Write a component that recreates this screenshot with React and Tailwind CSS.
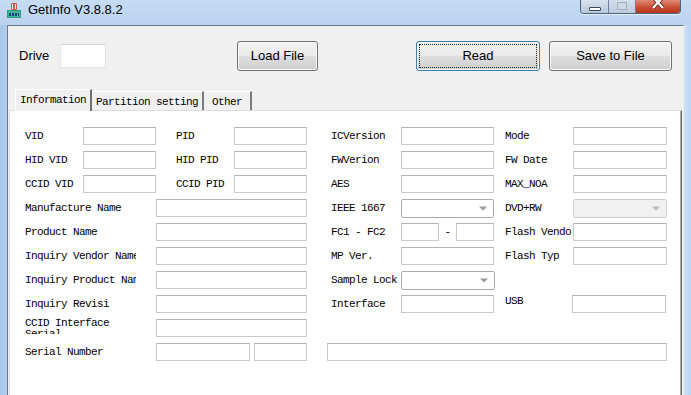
import React from "react";

const mono = { fontFamily: '"Liberation Mono", "DejaVu Sans Mono", monospace' };

function Box({ w, className = "" }) {
  return (
    <div
      className={
        "h-[18px] shrink-0 bg-white border border-[#cacaca] border-t-[#b4b4b4] " +
        w +
        " " +
        className
      }
    />
  );
}

function Combo({ w, disabled }) {
  return (
    <div
      className={
        "h-[19px] shrink-0 flex items-center justify-end pr-[6px] rounded-[2px] border " +
        (disabled ? "bg-[#f1f1f1] border-[#cdcdcd] " : "bg-white border-[#a9a9a9] ") +
        w
      }
    >
      <svg width="8" height="5" viewBox="0 0 8 5">
        <path d="M0 0.5 L8 0.5 L4 4.5 Z" fill={disabled ? "#b8b8b8" : "#9a9a9a"} />
      </svg>
    </div>
  );
}

function Lbl({ w, className = "", children }) {
  return (
    <div
      className={
        "shrink-0 overflow-hidden whitespace-nowrap text-[11px] tracking-[-0.6px] leading-[12px] text-black " +
        w +
        " " +
        className
      }
      style={mono}
    >
      {children}
    </div>
  );
}

function Btn({ w, focused, children }) {
  return (
    <div
      className={
        "h-[30px] shrink-0 rounded-[3px] border flex items-center justify-center text-[13px] text-black " +
        "bg-[linear-gradient(to_bottom,#f2f2f2_0%,#ebebeb_48%,#dddddd_52%,#cfcfcf_100%)] shadow-[inset_0_0_0_1px_#fbfbfb] " +
        (focused
          ? "border-[#3c7fb1] outline-1 outline-dotted outline-[#222] outline-offset-[-4px] "
          : "border-[#707070] ") +
        w
      }
      style={{ fontFamily: '"Liberation Sans", Arial, sans-serif' }}
    >
      {children}
    </div>
  );
}

function Row({ children }) {
  return <div className="flex items-center h-[18px]">{children}</div>;
}

export default function App() {
  return (
    <div className="w-[691px] h-[395px] overflow-hidden flex flex-col bg-[#b7d1ee]">
      {/* Title bar */}
      <div className="h-[25px] shrink-0 flex items-start bg-[linear-gradient(to_bottom,#c6dcf3,#bad3ee)]">
        <div className="ml-[7px] mt-[3px] w-[14px] h-[14px]">
          <svg width="14" height="15" viewBox="0 0 14 15">
            <rect x="4" y="0" width="6" height="7" rx="1" fill="#d9534a" />
            <rect x="5" y="1" width="1" height="5" fill="#fff" />
            <rect x="8" y="1" width="1" height="5" fill="#fff" />
            <rect x="0" y="7" width="14" height="8" fill="#2f9c86" />
            <rect x="1" y="8" width="12" height="6" fill="#3fb49a" />
            <rect x="2" y="10" width="2" height="3" fill="#1c3f8a" />
            <rect x="5" y="10" width="2" height="3" fill="#1c3f8a" />
            <rect x="8" y="10" width="2" height="3" fill="#1c3f8a" />
            <rect x="11" y="10" width="1" height="3" fill="#1c3f8a" />
          </svg>
        </div>
        <div
          className="ml-[7px] mt-[1px] text-[13px] leading-[17px] text-black"
          style={{ fontFamily: '"Liberation Sans", Arial, sans-serif' }}
        >
          GetInfo V3.8.8.2
        </div>
        <div className="flex-1" />
        {/* window controls */}
        <div className="mr-[10px] flex h-[14px] rounded-b-[4px] border border-t-0 border-[#4c6380] overflow-hidden shadow-[0_1px_0_#e6f0fa]">
          <div className="w-[28px] h-full bg-[linear-gradient(to_bottom,#d6e2ef,#b7c9dd)] flex items-start justify-center border-r border-[#6d839d]">
            <div className="mt-[7px] w-[12px] h-[4px] bg-white border border-[#38475a] rounded-[1px]" />
          </div>
          <div className="w-[27px] h-full bg-[linear-gradient(to_bottom,#d3dfec,#bccbdc)] flex items-start justify-center border-r border-[#6d839d]">
            <div className="mt-[2px] w-[10px] h-[8px] border border-[#9fb0c3] bg-[#cdd9e6]" />
          </div>
          <div className="w-[44px] h-full bg-[linear-gradient(to_bottom,#e08a74,#c84a30_60%,#b8381f)] flex items-start justify-center">
            <svg width="14" height="10" viewBox="0 0 14 10">
              <path d="M2 -3 L12 8 M12 -3 L2 8" stroke="#5a1a0f" strokeWidth="4" />
              <path d="M2 -3 L12 8 M12 -3 L2 8" stroke="#ffffff" strokeWidth="2.4" />
            </svg>
          </div>
        </div>
      </div>

      <div className="flex flex-1 min-h-0">
        {/* left frame */}
        <div className="w-[7px] shrink-0 bg-[linear-gradient(to_right,#a9c7e9,#b0cdee)]" />
        {/* client */}
        <div className="flex-1 min-w-0 flex flex-col bg-[#f0f0f0] border-l border-t border-[#6b7a8a] border-r border-r-[#e9eef4]">
          {/* top controls */}
          <div className="flex items-center h-[30px] mt-[15px] pl-[11px]">
            <div
              className="w-[41px] shrink-0 text-[13px] text-black"
              style={{ fontFamily: '"Liberation Sans", Arial, sans-serif' }}
            >
              Drive
            </div>
            <div className="w-[46px] h-[24px] shrink-0 bg-white border border-[#e3e3e3] border-t-[#d5d5d5]" />
            <div className="ml-[131px]">
              <Btn w="w-[81px]">Load File</Btn>
            </div>
            <div className="ml-[98px]">
              <Btn w="w-[124px]" focused>
                Read
              </Btn>
            </div>
            <div className="ml-[9px]">
              <Btn w="w-[123px]">Save to File</Btn>
            </div>
          </div>

          {/* tabs */}
          <div className="flex items-end h-[21px] mt-[18px] pl-[7px]" style={mono}>
            <div className="relative z-10 -mb-px w-[77px] h-[22px] bg-[#f0f0f0] border-l border-t border-white border-r-2 border-r-[#6f6f6f] flex items-start justify-center pt-[4px] text-[11px] tracking-[-0.6px] leading-[12px]">
              Information
            </div>
            <div className="w-[112px] h-[19px] bg-[#f0f0f0] border-t border-white border-r-2 border-r-[#7a7a7a] flex items-start justify-center pt-[4px] text-[11px] tracking-[-0.6px] leading-[12px]">
              Partition setting
            </div>
            <div className="w-[48px] h-[19px] bg-[#f0f0f0] border-t border-white border-r-2 border-r-[#7a7a7a] flex items-start justify-center pt-[4px] text-[11px] tracking-[-0.6px] leading-[12px]">
              Other
            </div>
          </div>

          {/* panel */}
          <div className="flex-1 ml-px mr-px bg-white border-l border-t border-[#dcdcdc] border-r border-r-[#6c6c6c] shadow-[inset_-1px_0_0_#a8a8a8] pl-[15px] pt-[16px] flex flex-col gap-[6px]">
            {/* row 1 */}
            <Row>
              <Lbl w="w-[58px]">VID</Lbl>
              <Box w="w-[73px]" />
              <Lbl w="w-[58px]" className="ml-[20px]">PID</Lbl>
              <Box w="w-[73px]" />
              <Lbl w="w-[70px]" className="ml-[24px]">ICVersion</Lbl>
              <Box w="w-[93px]" />
              <Lbl w="w-[68px]" className="ml-[11px]">Mode</Lbl>
              <Box w="w-[94px]" />
            </Row>
            <Row>
              <Lbl w="w-[58px]">HID VID</Lbl>
              <Box w="w-[73px]" />
              <Lbl w="w-[58px]" className="ml-[20px]">HID PID</Lbl>
              <Box w="w-[73px]" />
              <Lbl w="w-[70px]" className="ml-[24px]">FWVerion</Lbl>
              <Box w="w-[93px]" />
              <Lbl w="w-[68px]" className="ml-[11px]">FW Date</Lbl>
              <Box w="w-[94px]" />
            </Row>
            <Row>
              <Lbl w="w-[58px]">CCID VID</Lbl>
              <Box w="w-[73px]" />
              <Lbl w="w-[58px]" className="ml-[20px]">CCID PID</Lbl>
              <Box w="w-[73px]" />
              <Lbl w="w-[70px]" className="ml-[24px]">AES</Lbl>
              <Box w="w-[93px]" />
              <Lbl w="w-[68px]" className="ml-[11px]">MAX_NOA</Lbl>
              <Box w="w-[94px]" />
            </Row>
            <Row>
              <Lbl w="w-[111px]">Manufacture Name</Lbl>
              <Box w="w-[151px]" className="ml-[20px]" />
              <Lbl w="w-[70px]" className="ml-[24px]">IEEE 1667</Lbl>
              <Combo w="w-[93px]" />
              <Lbl w="w-[68px]" className="ml-[11px]">DVD+RW</Lbl>
              <Combo w="w-[94px]" disabled />
            </Row>
            <Row>
              <Lbl w="w-[111px]">Product Name</Lbl>
              <Box w="w-[151px]" className="ml-[20px]" />
              <Lbl w="w-[70px]" className="ml-[24px]">FC1 - FC2</Lbl>
              <Box w="w-[38px]" />
              <Lbl w="w-[17px]" className="text-center">-</Lbl>
              <Box w="w-[38px]" />
              <Lbl w="w-[68px]" className="ml-[11px]">Flash Vendo</Lbl>
              <Box w="w-[94px]" />
            </Row>
            <Row>
              <Lbl w="w-[111px]">Inquiry Vendor Name</Lbl>
              <Box w="w-[151px]" className="ml-[20px]" />
              <Lbl w="w-[70px]" className="ml-[24px]">MP Ver.</Lbl>
              <Box w="w-[93px]" />
              <Lbl w="w-[68px]" className="ml-[11px]">Flash Typ</Lbl>
              <Box w="w-[94px]" />
            </Row>
            <Row>
              <Lbl w="w-[111px]">Inquiry Product Name</Lbl>
              <Box w="w-[151px]" className="ml-[20px]" />
              <Lbl w="w-[70px]" className="ml-[24px]">Sample Lock</Lbl>
              <Combo w="w-[94px]" />
            </Row>
            <Row>
              <Lbl w="w-[111px]">Inquiry Revisi</Lbl>
              <Box w="w-[151px]" className="ml-[20px]" />
              <Lbl w="w-[70px]" className="ml-[24px]">Interface</Lbl>
              <Box w="w-[93px]" />
              <Lbl w="w-[67px]" className="ml-[11px] -mt-[6px]">USB</Lbl>
              <Box w="w-[94px]" />
            </Row>
            <Row>
              <div className="w-[111px] h-[16px] shrink-0 self-start -mt-[1px] overflow-hidden">
                <div
                  className="text-[11px] tracking-[-0.6px] leading-[11px] text-black w-[100px] break-words"
                  style={mono}
                >
                  CCID Interface Serial
                </div>
              </div>
              <Box w="w-[151px]" className="ml-[20px]" />
            </Row>
            <Row>
              <Lbl w="w-[111px]">Serial Number</Lbl>
              <Box w="w-[94px]" className="ml-[20px]" />
              <Box w="w-[53px]" className="ml-[4px]" />
              <Box w="w-[340px]" className="ml-[20px]" />
            </Row>
          </div>
        </div>
        {/* right frame */}
        <div className="w-[7px] shrink-0 bg-[linear-gradient(to_right,#cfe2f6,#b9d4f1)]" />
      </div>
    </div>
  );
}
